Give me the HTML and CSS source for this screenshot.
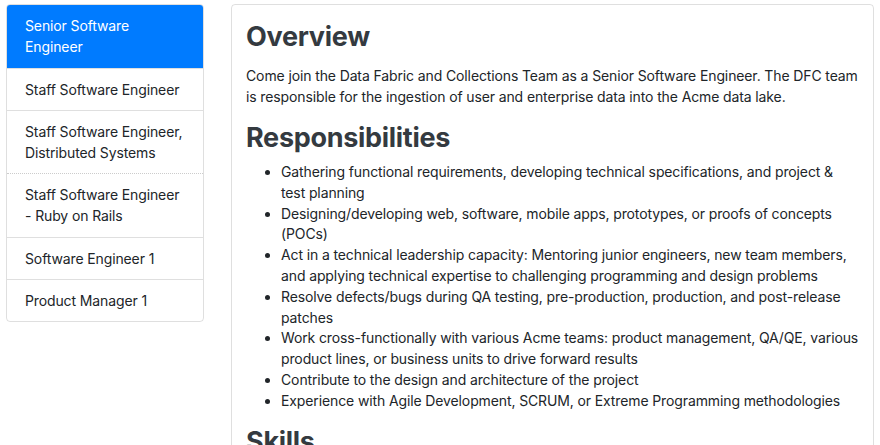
FILE: index.html
```html
<!DOCTYPE html>
<html>
<head>
<meta charset="utf-8">
<link rel="stylesheet" href="styles.css">
</head>
<body>
<div class="page">
  <nav class="list-group">
    <a class="item active">Senior Software Engineer</a>
    <a class="item">Staff Software Engineer</a>
    <a class="item">Staff Software Engineer, Distributed Systems</a>
    <a class="item dotted">Staff Software Engineer - Ruby on Rails</a>
    <a class="item">Software Engineer 1</a>
    <a class="item">Product Manager 1</a>
  </nav>
  <main class="card">
    <h2 class="heading">Overview</h2>
    <p class="text">Come join the Data Fabric and Collections Team as a Senior Software Engineer. The DFC team is responsible for the ingestion of user and enterprise data into the Acme data lake.</p>
    <h2 class="heading">Responsibilities</h2>
    <ul class="bullets">
      <li>Gathering functional requirements, developing technical specifications, and project &amp; test planning</li>
      <li>Designing/developing web, software, mobile apps, prototypes, or proofs of concepts (POCs)</li>
      <li>Act in a technical leadership capacity: Mentoring junior engineers, new team members, and applying technical expertise to challenging programming and design problems</li>
      <li>Resolve defects/bugs during QA testing, pre-production, production, and post-release patches</li>
      <li>Work cross-functionally with various Acme teams: product management, QA/QE, various product lines, or business units to drive forward results</li>
      <li>Contribute to the design and architecture of the project</li>
      <li>Experience with Agile Development, SCRUM, or Extreme Programming methodologies</li>
    </ul>
    <h2 class="heading">Skills</h2>
  </main>
</div>
</body>
</html>
```

FILE: styles.css
```css
html, body {
  margin: 0;
  padding: 0;
  background: #fff;
}
body {
  font-family: Inter, "Liberation Sans", Arial, sans-serif;
  font-size: 14px;
  line-height: 21px;
  letter-spacing: -0.12px;
  color: #212529;
  overflow: hidden;
}
.page {
  display: flex;
  align-items: flex-start;
  gap: 27px;
  padding: 4px 6px 0 6px;
}
.list-group {
  width: 198px;
  box-sizing: border-box;
  flex: none;
  display: flex;
  flex-direction: column;
  border: 1px solid rgba(0,0,0,.125);
  border-radius: 4px;
  overflow: hidden;
}
.item {
  display: block;
  padding: 10px 17px 10px 18px;
  color: #212529;
  text-decoration: none;
  border-top: 1px solid rgba(0,0,0,.125);
}
.item:first-child {
  border-top: none;
}
.item.dotted {
  border-top: 1px dotted rgba(0,0,0,.2);
  padding-bottom: 11px;
}
.item.active {
  background: #007bff;
  color: #fff;
  padding-top: 10px;
  padding-bottom: 11px;
}
.card {
  flex: 1;
  height: 460px;
  border: 1px solid rgba(0,0,0,.125);
  border-radius: 4px;
  padding: 15px 14px;
  box-sizing: border-box;
}
.heading {
  margin: 0 0 7px 0;
  font-size: 27px;
  line-height: 34px;
  font-weight: 700;
  color: #343a40;
  letter-spacing: -0.3px;
}
.text {
  margin: 11px 0 14px 0;
}
.bullets {
  margin: 0 0 13px 0;
  padding-left: 35px;
  line-height: 20.8px;
}
```
